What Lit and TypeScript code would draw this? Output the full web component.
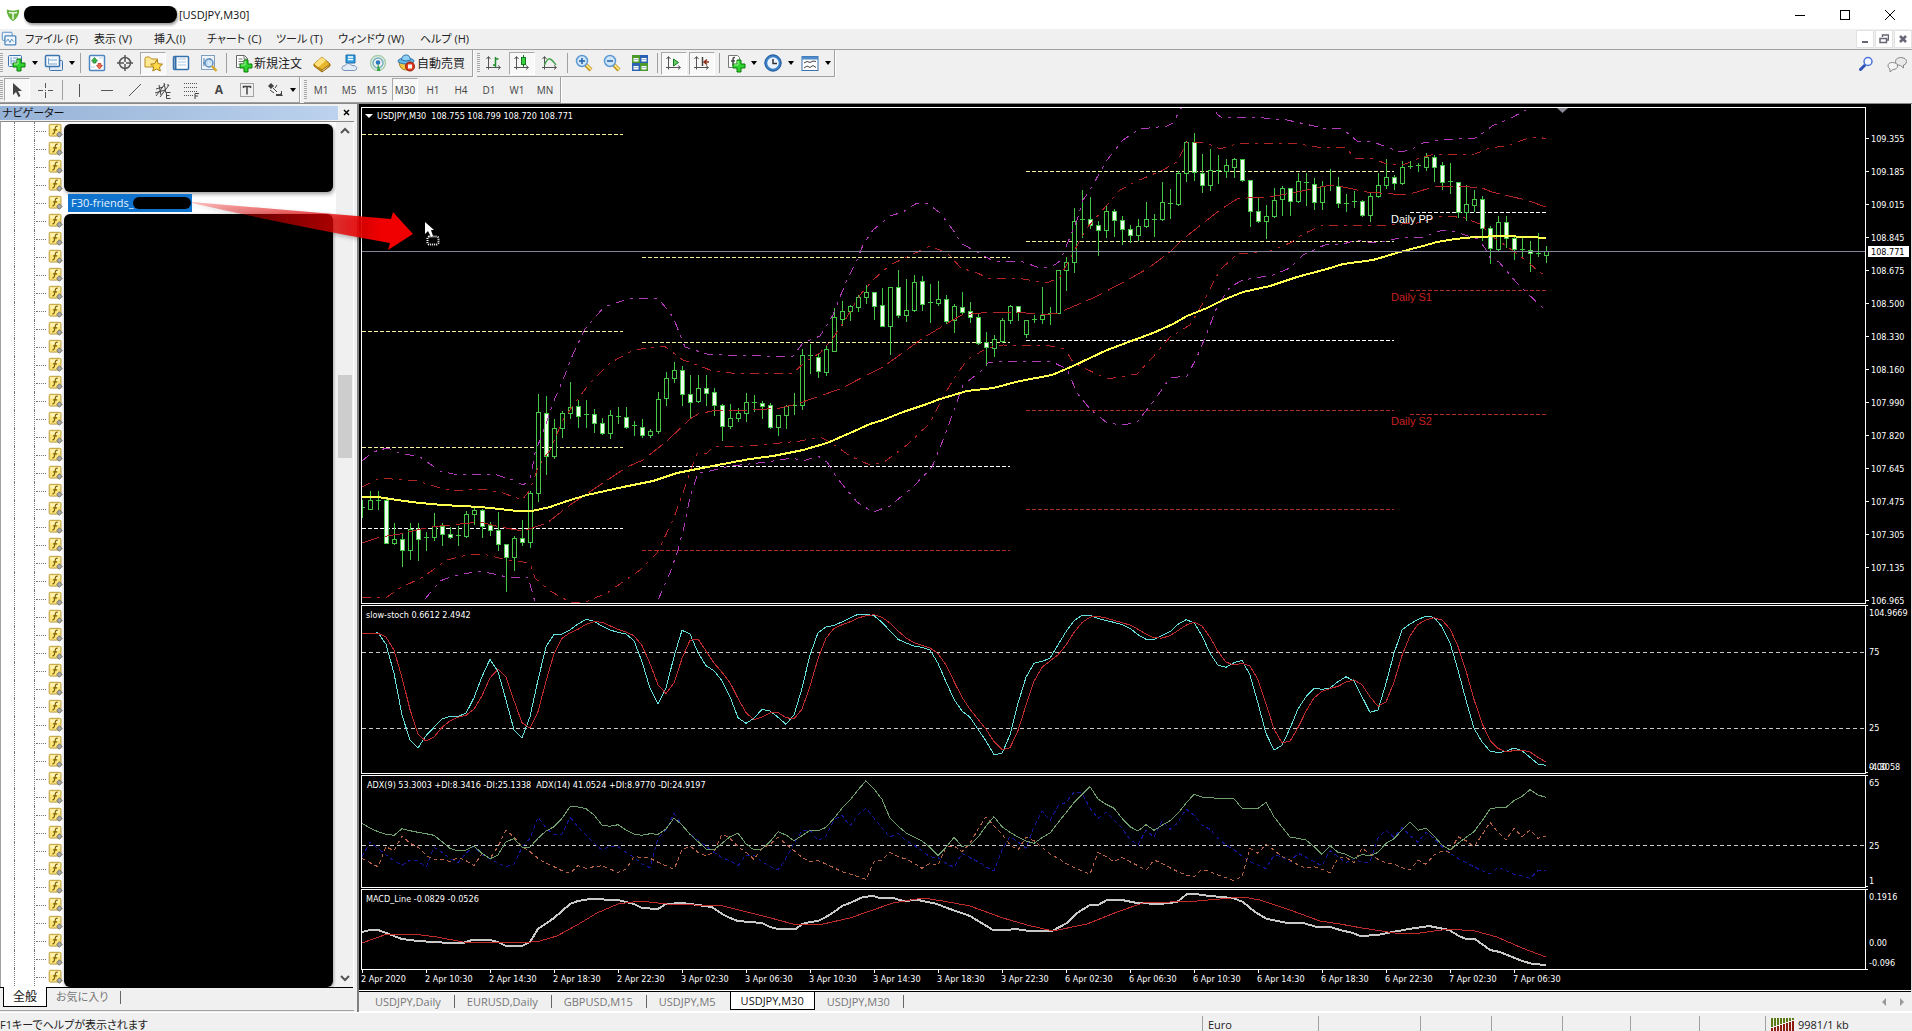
import { LitElement, html, svg, css, nothing } from "lit";
import type { SVGTemplateResult } from "lit";
import { customElement, property } from "lit/decorators.js";
import { classMap } from "lit/directives/class-map.js";

/* ------------------------------------------------------------------ */
/* Icons                                                               */
/* ------------------------------------------------------------------ */

const plus = (x: number, y: number) => svg`
  <path d="M${x + 4} ${y}h4v4h4v4h-4v4h-4v-4h-4v-4h4z" fill="#2fd32f" stroke="#0b7a0b"/>
  <path d="M${x + 5} ${y + 1}v4h-4" fill="none" stroke="#a8f5a0"/>`;

const axes = svg`
  <path d="M4.500 4v12.500M2 14.500h14" fill="none" stroke="#555"/>
  <path d="M2.500 6l2-2.500l2 2.500M14 12.500l2.500 2l-2.500 2" fill="none" stroke="#555"/>`;

const magnifier = (minus: boolean) => svg`
  <path d="M12 12l5 5" stroke="#b8901c" stroke-width="4"/>
  <path d="M12 11.500l5 5" stroke="#ffe27a" stroke-width="2"/>
  <circle cx="8" cy="8" r="5.500" fill="#cfe6fa" stroke="#5f9ad2" stroke-width="1.500"/>
  <path d="M5 8h6" stroke="#1f5fa8" stroke-width="1.500"/>
  ${minus ? nothing : svg`<path d="M8 5v6" stroke="#1f5fa8" stroke-width="1.500"/>`}`;

const icons: Record<string, SVGTemplateResult> = {
  newChart: svg`
    <rect x="1.500" y="2.500" width="13" height="11" rx="1" fill="#eef5fc" stroke="#3d74ad"/>
    <path d="M4 4v7h8M4 8h7M6 5h5" stroke="#7aa6d0" fill="none"/>${plus(6, 6)}`,
  profiles: svg`
    <rect x="5.500" y="7.500" width="13" height="10" rx="1" fill="#dfeaf6" stroke="#3d74ad"/>
    <rect x="1.500" y="2.500" width="14" height="11" rx="1" fill="#f4f9fe" stroke="#3d74ad" stroke-width="1.500"/>
    <path d="M4 11h9M4 7h9M4.500 5v6" stroke="#7aa6d0" fill="none"/>`,
  marketWatch: svg`
    <rect x="2.500" y="2.500" width="15" height="15" rx="1" fill="#fff" stroke="#4d86bf" stroke-width="1.500"/>
    <path d="M7.500 4.500l3 3.500h-1.500v2h-3v-2h-1.500z" fill="#39b54a" stroke="#197a28" stroke-width=".7"/>
    <path d="M12.500 16l-3-3.500h1.500v-2h3v2h1.500z" fill="#ef6d51" stroke="#b53018" stroke-width=".7"/>
    <path d="M12 5h4M4 14h4" stroke="#bcd3ea"/>`,
  target: svg`
    <circle cx="10" cy="10" r="5.500" fill="none" stroke="#555" stroke-width="1.500"/>
    <path d="M10 2v7M10 11v7M2 10h7M11 10h7" stroke="#555" stroke-width="1.500"/>`,
  navigator: svg`
    <path d="M2 5.500q0-1.500 1.500-1.500h3l2 2h6v8h-12.500z" fill="#ffe891" stroke="#b98d1d"/>
    <path d="M13.500 7l1.900 3.700l4.100.5l-3 2.800l.8 4l-3.800-2l-3.700 2l.8-4l-3-2.800l4.100-.5z" fill="#ffd94a" stroke="#a87d12"/>`,
  dataWindow: svg`
    <rect x="2.500" y="3.500" width="15" height="13" rx="1" fill="#fff" stroke="#3470ab" stroke-width="1.500"/>
    <path d="M4.500 4v12" stroke="#2f6aa8" stroke-width="2"/>
    <path d="M7 6h8M7 9h8M7 12h8" stroke="#a9c5e2"/>`,
  tester: svg`
    <rect x="2.500" y="2.500" width="13" height="14" fill="#eef4fa" stroke="#7f9fbf"/>
    <path d="M5 13v-8M8 12v-5M11 10v-5M4 10h2M7 8h2" stroke="#4f78a3" fill="none"/>
    <circle cx="10" cy="10" r="4" fill="#cfe6fa" fill-opacity=".8" stroke="#5d8fc2" stroke-width="1.500"/>
    <path d="M13 13l4.500 5" stroke="#d8a928" stroke-width="2.500"/>`,
  order: svg`
    <path d="M3.500 2.500h8l3 3v9h-11z" fill="#fff" stroke="#666"/>
    <path d="M11 2.500v3.500h3.500M5.500 6h4M5.500 8.500h6M5.500 11h4" stroke="#777" fill="none"/>${plus(7, 7)}`,
  gold: svg`
    <path d="M2 11l8-7l8 7l-8 6z" fill="#e8b62c" stroke="#9a6b0a"/>
    <path d="M2 11l8-7l4 3.500l-8 7z" fill="#ffe07a"/>
    <path d="M2 11v2l8 6v-2M18 11v2l-8 6" fill="#c8901a" stroke="#9a6b0a"/>`,
  cloud: svg`
    <path d="M6 2h9v8h-9z" fill="#35a0e0" stroke="#1a6cab"/>
    <path d="M8 4h5M8 6.500h5" stroke="#fff" stroke-width="1.500"/>
    <path d="M4 17.500q-2.500-.5-2-3q.6-2 3-1.800q1-2.700 4-2.200q2 .3 2.700 2q4-.6 5 2q.6 2.500-2 3z" fill="#e2ecf7" stroke="#7a94b8"/>`,
  signal: svg`
    <circle cx="10" cy="10" r="7.500" fill="none" stroke="#a9cfae" stroke-width="1.500"/>
    <circle cx="10" cy="10" r="5" fill="none" stroke="#6fb0b8" stroke-width="1.500"/>
    <circle cx="10" cy="9.500" r="2.300" fill="#2c74c0"/>
    <path d="M10 10l2.500 8h-3.500z" fill="#35a344"/>`,
  auto: svg`
    <path d="M3 9q1 8 7 8t7-8z" fill="#f4c842" stroke="#a87a12"/>
    <ellipse cx="10" cy="8" rx="8" ry="3" fill="#66b6e8" stroke="#2d75a8"/>
    <path d="M5.500 7q.5-5 4.500-5t4.500 5q-4.500 2-9 0z" fill="#8fd0f4" stroke="#2d75a8"/>
    <circle cx="14" cy="13.500" r="4.500" fill="#df3a1c" stroke="#9a1c08"/>
    <rect x="12" y="11.500" width="4" height="4" fill="#fff"/>`,
  bars: svg`${axes}<path d="M11.500 4v10M9 12h2.500M11.500 6h3" stroke="#1f8c2c" stroke-width="1.500" fill="none"/>`,
  candles: svg`${axes}<path d="M11.500 2v12" stroke="#137a1f"/><rect x="9.500" y="4.500" width="4" height="7" fill="#3ad33f" stroke="#137a1f"/>`,
  line: svg`${axes}<path d="M4.500 12q3-7 5.500-6t6 6" stroke="#4aa455" fill="none" stroke-width="1.500"/>`,
  zoomIn: svg`${magnifier(false)}`,
  zoomOut: svg`${magnifier(true)}`,
  tile: svg`
    <rect x="2" y="2" width="8" height="8" fill="#4c9a2a"/><rect x="10" y="2" width="8" height="8" fill="#2c62b5"/>
    <rect x="2" y="10" width="8" height="8" fill="#2c62b5"/><rect x="10" y="10" width="8" height="8" fill="#4c9a2a"/>
    <path d="M3.500 5h5v3.500h-5zM11.500 5h5v3.500h-5zM3.500 13h5v3.500h-5zM11.500 13h5v3.500h-5z" fill="#fff"/>
    <path d="M4 6.500h4M12 6.500h4M4 14.500h4M12 14.500h4" stroke="#9fb7cf"/>`,
  autoScroll: svg`${axes}<path d="M9.500 6v7l5-3.500z" fill="#5fd05f" stroke="#137a1f"/>`,
  shift: svg`${axes}<path d="M10.500 4v9" stroke="#444" stroke-width="1.500"/><path d="M12 9h5M15 6.500l-3 2.500l3 2.500" stroke="#8c2f14" fill="none" stroke-width="1.500"/>`,
  indicators: svg`
    <path d="M2.500 2.500h9l2 2v10h-11z" fill="#fff" stroke="#777"/>
    <path d="M9 4.500q-2-.5-2 2v6M5 8h4" stroke="#444" fill="none" stroke-width="1.500"/>${plus(7, 7)}`,
  clock: svg`
    <circle cx="10" cy="10" r="7" fill="#eaf3fc" stroke="#3a80c8" stroke-width="2.500"/>
    <circle cx="10" cy="10" r="8.200" fill="none" stroke="#1d5798"/>
    <path d="M10 6v4.500h4" stroke="#333" fill="none" stroke-width="1.500"/>`,
  template: svg`
    <rect x="2" y="3.500" width="16" height="14" fill="#fff" stroke="#3a72ad"/>
    <path d="M2 5h16" stroke="#4f8ccb" stroke-width="3"/>
    <path d="M4 10l3-1.500l3 1l3-1.500l3 .5M4 15l3-2l3 1.500l3-2l3 2" stroke="#444" fill="none"/>`,
  search: svg`
    <path d="M4.500 15.500l4-4" stroke="#2f51b8" stroke-width="3" stroke-linecap="round"/>
    <circle cx="12" cy="7.500" r="4" fill="#f4f7ff" stroke="#4c74d6" stroke-width="1.500"/>`,
  chat: svg`
    <path d="M13.500 3.500q6 .3 6 4q0 3-3 3.500v3l-3-2.500q-5-.5-5-4t5-4z" fill="#e9e9e9" stroke="#888"/>
    <path d="M5.500 8.500q5 .2 5 3.500t-4.500 3.500l-3 2.500v-3q-2-1-2-3q0-3.500 4.500-3.500z" fill="#f4f4f4" stroke="#888"/>`,
  cursor: svg`<path d="M6 3v12l3-3l2.500 5l2-1l-2.500-5h4z" fill="#444"/>`,
  cross: svg`<path d="M10.500 3v5M10.500 12v6M3 10.500h5M13 10.500h5M10 10.500h1" stroke="#555"/>`,
  vline: svg`<path d="M10.500 4v13" stroke="#555"/>`,
  hline: svg`<path d="M4 10.500h12" stroke="#555"/>`,
  trend: svg`<path d="M4 16l12-12" stroke="#555"/>`,
  channel: svg`
    <path d="M3 16l9-12M7 17l9-12M3 9l7-2M2 13l10-3M6 5l2 10M11 3l2 10M14 5h2" stroke="#444" fill="none"/>
    <path d="M17.500 12.500h-4v6h4M13.500 15.500h3" stroke="#444" fill="none"/>`,
  fibo: svg`
    <path d="M3 3.500h14M3 7.500h14M3 11.500h14M3 15.500h9" stroke="#555" stroke-dasharray="1 1"/>
    <path d="M18 13.500h-4v5.500M14 16h3" stroke="#444" fill="none"/>`,
  textBox: svg`
    <rect x="3.500" y="3.500" width="13" height="13" fill="none" stroke="#555" stroke-dasharray="1 1"/>
    <path d="M6 6.500h8M10 6.500v8M6.500 6v2M13.500 6v2" stroke="#444" fill="none" stroke-width="1.500"/>`,
  arrows: svg`
    <path d="M3 6l3-3l3 3l-3 3z" fill="#444"/><path d="M8 8l4 4M12 5l-2 3M5 10l4 3" stroke="#444"/>
    <path d="M11 14h5v-3h1v5h-6z" fill="#444"/><path d="M13 16l3-3l2 3z" fill="#444"/>`,
  chartWindow: svg`
    <rect x="2.500" y="2.500" width="11" height="9" rx="1" fill="#eaf3fc" stroke="#4d86bf"/>
    <rect x="5.500" y="6.500" width="12" height="10" rx="1" fill="#f4f9fe" stroke="#4d86bf" stroke-width="1.500"/>
    <path d="M7 13l2-3l2 4l2-4l2 3" fill="none" stroke="#4d86bf"/>`,
  logo: svg`
    <path d="M3 4q7 2.500 14 0q0 9-7 13q-7-4-7-13z" fill="#64b33c"/>
    <path d="M5.500 7q4.500 1.500 9 0M10 8v7" stroke="#fff" stroke-width="1.500" fill="none"/>`,
  indicator: svg`
    <rect x="1.500" y="1.500" width="15" height="15" rx="1.500" fill="#fbe47a" stroke="#a98722"/>
    <path d="M3 3h12v4h-12z" fill="#fff4b8"/>
    <path d="M12.500 4q-2.800-.8-3.300 2.500l-1 5q-.5 2.500-2.700 2M6.500 8.500h5" fill="none" stroke="#7c5d0a" stroke-width="1.500"/>
    <path d="M14.500 11l3.500 3.500l-3.500 3.500l-3.500-3.500z" fill="#a9a9a9" stroke="#5f5f5f"/>`,
};

const icon = (name: string, cls = "icon") =>
  html`<svg class=${cls} viewBox="0 0 20 20" aria-hidden="true">${icons[name]}</svg>`;

/* ------------------------------------------------------------------ */
/* Chart data                                                          */
/* ------------------------------------------------------------------ */

const STEP = 8;

/* high, body top, body bottom, low, bearish */
const candles: number[][] = [
  [500,507,509,517,0],[491,500,509,509,0],[491,500,501,509,0],[499,500,543,543,1],[523,539,543,544,0],
  [534,539,550,566,1],[523,529,550,559,0],[523,529,539,560,1],[532,537,539,550,0],[513,526,537,540,0],
  [523,526,534,545,1],[527,534,537,538,1],[526,535,537,545,0],[511,514,536,537,0],[507,510,514,524,0],
  [509,510,526,537,1],[522,525,530,535,1],[512,530,544,550,1],[544,544,557,591,1],[536,538,557,570,0],
  [520,538,542,545,1],[491,493,542,547,0],[394,412,493,501,0],[396,413,456,474,1],[419,428,456,458,0],
  [411,413,428,437,0],[382,407,413,418,0],[400,406,416,427,1],[400,414,416,427,0],[409,414,423,432,1],
  [418,423,433,434,1],[410,415,433,438,0],[407,416,418,423,1],[407,417,427,428,1],[421,425,426,435,1],
  [419,427,435,437,1],[429,431,435,437,0],[392,399,431,433,0],[372,378,398,405,0],[362,370,378,382,0],
  [366,370,394,405,1],[375,394,402,418,1],[375,388,401,402,0],[375,388,393,405,1],[388,392,405,415,1],
  [404,405,426,440,1],[404,418,426,428,0],[408,413,418,421,0],[393,402,413,421,0],[395,402,403,411,0],
  [401,403,406,418,1],[403,405,427,428,1],[415,415,427,435,0],[405,406,415,428,0],[393,405,406,414,0],
  [349,355,405,409,0],[344,355,357,373,1],[354,357,371,377,1],[345,349,372,375,0],[308,317,351,351,0],
  [301,311,319,325,0],[305,306,311,320,0],[295,297,307,311,0],[285,292,297,303,0],[292,292,306,319,1],
  [288,305,326,326,1],[287,287,326,354,0],[270,287,315,317,1],[279,310,315,321,0],[275,282,310,311,0],
  [276,281,304,310,1],[284,302,304,322,1],[281,299,303,305,0],[295,299,321,323,1],[304,306,320,332,0],
  [292,307,312,314,1],[302,311,317,322,1],[314,317,343,344,1],[332,342,347,365,1],[335,339,348,356,0],
  [318,320,341,342,0],[305,306,320,323,0],[306,306,312,320,1],[320,320,334,337,0],[315,319,320,322,1],
  [287,315,319,323,0],[307,313,315,324,0],[270,270,313,313,0],[257,262,270,290,0],[208,221,262,272,0],
  [190,219,220,237,1],[197,219,225,228,1],[221,225,230,255,1],[206,211,230,237,0],[209,211,220,236,1],
  [216,220,229,244,1],[225,229,235,242,1],[219,226,235,240,0],[202,219,226,227,0],[214,219,220,236,0],
  [182,202,219,220,0],[189,203,204,218,0],[171,173,204,205,0],[141,142,173,181,0],[133,142,172,180,1],
  [154,173,185,192,1],[149,170,185,190,0],[155,170,171,183,1],[159,165,171,177,0],[158,159,167,177,0],
  [159,159,180,181,1],[180,180,211,226,1],[198,211,221,222,1],[205,216,221,238,0],[188,200,216,217,0],
  [186,188,199,215,0],[188,188,201,215,1],[173,181,201,202,0],[173,182,184,205,1],[178,184,202,209,1],
  [181,186,202,209,0],[169,185,186,190,1],[177,186,203,207,1],[194,203,204,211,0],[191,201,202,207,1],
  [200,201,215,216,1],[193,196,215,221,0],[173,185,196,197,0],[159,177,185,188,0],[175,177,183,189,1],
  [161,167,183,184,0],[161,166,168,168,1],[163,165,167,171,0],[153,157,167,170,0],[155,157,167,181,1],
  [162,165,182,189,1],[163,181,183,193,1],[182,182,212,217,1],[185,204,212,220,0],[190,199,205,211,0],
  [196,199,228,240,1],[226,228,248,263,1],[216,222,249,250,0],[216,222,238,247,1],[236,238,249,259,1],
  [238,249,250,257,1],[241,250,253,271,1],[233,253,255,256,1],[246,251,255,262,0],
];

const movingAverage = "362,497 378,497 397,500 420,503 443,505 480,507 500,509 517,511 532,511 550,507 567,501 587,495 623,487 653,481 677,473 707,467 723,464 750,459 773,456 803,450 827,443 850,433 870,424 883,420 903,412 927,404 940,399 967,391 993,388 1020,381 1052,375 1073,366 1107,350 1153,333 1173,324 1187,316 1207,308 1223,300 1243,292 1270,286 1297,277 1327,269 1343,264 1373,260 1400,252 1423,246 1437,242 1455,239 1475,237 1502,236 1529,237 1546,238";

const bandMiddle = "362,543 380,537 400,534 430,527 460,524 480,522 500,527 523,531 547,523 570,505 597,487 627,467 643,460 667,441 690,419 698,414 717,410 740,411 780,408 797,404 817,397 840,389 883,367 923,338 953,320 962,315 990,312 1018,312 1043,315 1058,313 1093,298 1122,283 1147,269 1170,252 1183,239 1220,210 1237,199 1247,198 1270,197 1297,192 1317,188 1330,185 1343,187 1367,192 1393,194 1410,194 1437,186 1458,186 1482,188 1492,192 1509,196 1526,200 1546,207";

const redBands = [
  "362,487 380,478 417,481 437,487 453,491 483,489 503,493 522,500 530,490 538,467 550,450 563,420 577,400 590,383 610,363 634,350 664,346 683,360 713,371 740,374 757,373 793,373 805,362 820,353 833,338 847,317 860,295 873,280 890,265 907,257 930,246 947,253 962,269 973,271 988,278 1023,279 1047,283 1060,277 1073,253 1087,228 1107,205 1120,190 1137,181 1163,170 1177,162 1187,142 1207,143 1220,149 1240,143 1273,144 1293,143 1317,147 1345,147 1355,158 1373,159 1387,164 1403,165 1417,159 1431,155 1475,154 1489,148 1506,146 1526,139 1539,137 1546,139",
  "362,597 387,597 400,588 423,577 447,560 467,555 483,554 507,560 523,562 530,563 535,578 550,591 570,602 583,603 607,593 640,570 657,553 673,520 683,493 690,472 697,454 707,453 713,447 750,446 770,444 800,441 820,437 830,442 850,456 870,465 883,463 907,445 930,423 943,397 953,380 967,360 987,348 1003,345 1050,346 1065,349 1073,362 1080,366 1107,379 1137,374 1153,357 1170,337 1190,325 1203,303 1213,283 1220,270 1237,254 1270,251 1290,243 1303,234 1323,225 1360,225 1387,225 1417,223 1440,216 1448,216 1465,218 1482,225 1490,235 1502,243 1516,253 1529,263 1539,272 1546,276",
];

const purpleBands = [
  "362,461 373,452 387,448 400,453 420,457 440,471 453,474 497,475 513,480 523,485 530,480 535,453 545,427 553,403 563,380 573,354 585,329 604,307 628,299 658,298 673,317 685,347 707,354 740,356 753,355 780,357 793,356 803,343 820,336 833,315 840,297 847,280 857,260 863,245 873,230 890,216 903,212 917,203 927,203 940,213 953,230 962,244 977,252 993,261 1023,262 1037,267 1050,268 1060,261 1068,242 1077,220 1083,200 1090,190 1107,160 1123,140 1140,129 1167,126 1173,123 1180,110 1187,100 1210,100 1217,114 1222,118 1253,117 1287,120 1323,128 1343,129 1357,141 1373,142 1400,152 1410,150 1423,143 1440,140 1475,138 1483,133 1492,126 1509,119 1526,110 1546,100",
  "425,599 440,581 453,576 480,571 507,577 528,577 535,602 545,640 650,625 658,600 670,573 678,550 685,523 690,497 698,473 710,471 730,466 740,465 767,462 793,458 803,461 818,456 827,462 837,478 857,502 873,512 890,506 913,487 932,467 943,440 953,413 963,385 980,372 988,363 1003,361 1050,361 1067,369 1077,393 1090,409 1107,423 1123,425 1137,422 1153,402 1170,378 1187,376 1197,357 1207,333 1217,307 1230,287 1243,280 1273,275 1290,268 1303,255 1327,244 1343,244 1357,240 1373,243 1387,241 1403,237 1420,238 1440,231 1448,230 1465,235 1478,239 1485,248 1490,258 1499,262 1516,282 1526,292 1543,308",
];

/* x start, x end, y, colour class */
const levels: [number, number, number, string][] = [
  [362,623,134,"khaki"],[362,623,331,"khaki"],[362,623,447,"khaki"],[362,623,528,"white"],
  [642,1010,257,"khaki"],[642,1010,342,"khaki"],[642,1010,466,"white"],[642,1010,550,"red"],
  [1026,1394,171,"khaki"],[1026,1394,241,"khaki"],[1026,1394,340,"white"],[1026,1394,410,"red"],[1026,1394,509,"red"],
  [1410,1546,212,"white"],[1410,1546,290,"red"],[1410,1546,414,"red"],
];

/* oscillator samples, one per bar, three units to a pixel */
const stoch = [100,102,98,133,220,345,420,444,407,382,357,349,349,340,293,230,178,215,300,390,414,350,240,140,103,102,90,72,58,64,78,90,97,102,122,185,265,312,265,170,91,102,158,197,212,242,290,353,370,355,328,333,352,373,345,265,165,98,81,76,66,54,43,43,47,67,93,118,129,138,142,150,190,245,298,333,352,388,423,464,460,405,310,232,190,184,175,135,95,62,46,46,55,62,67,74,85,104,118,118,107,95,73,59,68,107,160,196,202,188,181,225,310,400,450,436,385,327,290,265,268,264,245,230,243,290,337,330,250,160,90,72,58,49,52,80,128,210,300,385,425,453,458,454,444,452,472,492,496];

const adx = [670,684,695,703,706,686,692,697,701,706,725,745,753,750,738,760,776,765,725,716,741,741,715,693,680,655,620,621,626,645,675,679,674,690,702,706,701,703,687,654,675,703,725,747,749,730,710,700,732,750,747,725,695,705,722,707,691,693,682,655,625,600,570,542,567,598,655,678,699,711,723,742,767,742,712,739,736,712,678,650,680,697,711,723,730,713,699,668,638,608,583,560,597,613,625,655,680,693,674,691,676,662,640,610,583,591,593,595,595,596,625,625,625,607,650,681,711,715,720,740,763,737,757,763,776,763,768,757,730,716,690,667,691,685,708,735,750,730,712,695,663,627,622,622,602,589,569,585,592];

const plusDi = [770,727,745,765,783,796,780,783,802,742,757,775,788,760,738,765,776,790,800,792,742,715,652,683,705,702,652,680,705,730,750,738,740,757,772,792,803,715,690,640,675,703,720,738,757,773,782,797,765,765,785,800,810,775,730,692,690,722,708,660,645,678,645,624,655,683,712,700,722,735,753,770,773,790,802,760,773,785,800,812,750,710,725,745,680,633,662,618,607,577,578,625,655,637,660,685,718,735,690,712,662,688,668,627,645,675,688,715,735,750,768,785,795,806,765,770,785,760,772,785,797,752,770,788,775,788,785,715,690,712,683,707,727,697,715,740,760,775,788,800,812,822,802,812,823,828,835,812,812];

const minusDi = [775,788,800,740,752,708,730,742,765,780,777,785,772,782,797,760,775,740,690,712,740,755,775,790,800,812,820,797,805,800,797,807,817,808,770,772,775,787,797,808,750,738,757,767,757,702,715,740,757,778,745,733,712,732,752,772,785,782,792,803,815,822,830,838,785,780,757,770,777,790,805,790,797,740,738,755,730,688,650,678,702,735,750,712,722,742,762,775,790,803,812,823,757,770,785,772,785,797,811,780,790,803,815,825,831,808,815,825,833,842,830,745,760,733,750,770,780,795,804,800,808,818,775,772,788,745,762,778,788,793,803,810,780,793,765,753,757,710,722,740,705,667,697,720,685,710,690,715,708];

const macd = "362,932 370,930 378,930 386,933 402,939 418,941 434,942 450,943 463,943 472,940 490,940 498,942 506,946 522,946 530,942 538,929 554,918 562,911 570,904 578,901 590,899 618,900 634,904 642,908 658,909 666,904 682,903 698,905 712,907 722,914 730,918 738,921 762,923 770,927 778,929 796,929 802,924 810,922 818,921 826,917 834,912 842,906 850,903 863,897 873,896 880,898 893,898 903,901 918,900 937,904 947,908 970,916 993,930 1007,930 1015,929 1030,931 1052,931 1067,923 1077,913 1090,905 1098,905 1107,900 1122,900 1137,903 1160,904 1177,902 1187,894 1195,894 1210,896 1233,898 1243,902 1255,912 1267,919 1288,923 1303,923 1317,927 1330,927 1340,930 1353,933 1360,936 1378,935 1387,933 1409,929 1429,926 1449,930 1459,936 1466,939 1475,939 1490,950 1500,952 1522,961 1533,964 1546,965";

const macdSignal = "362,943 387,934 413,934 437,937 463,942 523,943 540,941 557,936 577,925 597,913 618,904 640,901 667,904 723,906 743,911 767,917 793,924 823,924 850,918 867,912 893,903 923,898 943,901 970,906 1003,918 1027,925 1053,931 1087,924 1117,912 1143,903 1197,901 1243,897 1260,900 1290,910 1320,921 1340,924 1362,928 1395,933 1420,933 1449,929 1475,931 1497,937 1522,948 1546,957";

const perBar = (values: number[], top: number) =>
  values.map((v, i) => `${i * STEP},${Math.round((v / 3 - top) * 10) / 10}`).join(" ");

const smooth = (values: number[]) =>
  values.map((v, i) => {
    const a = values[Math.max(0, i - 1)];
    const b = values[Math.max(0, i - 2)];
    return (v + a + b) / 3;
  });

const times = ["2 Apr 2020","2 Apr 10:30","2 Apr 14:30","2 Apr 18:30","2 Apr 22:30","3 Apr 02:30","3 Apr 06:30","3 Apr 10:30","3 Apr 14:30","3 Apr 18:30","3 Apr 22:30","6 Apr 02:30","6 Apr 06:30","6 Apr 10:30","6 Apr 14:30","6 Apr 18:30","6 Apr 22:30","7 Apr 02:30","7 Apr 06:30"];

const prices = ["109.355","109.185","109.015","108.845","108.675","108.500","108.330","108.160","107.990","107.820","107.645","107.475","107.305","107.135","106.965"];

/* ------------------------------------------------------------------ */
/* Title bar and menu                                                  */
/* ------------------------------------------------------------------ */

const uiFont = css`"Open Sans", "Noto Sans CJK JP", sans-serif`;

@customElement("title-bar")
class TitleBar extends LitElement {
  static styles = css`
    :host { display: block; font-family: ${uiFont}; font-feature-settings: "palt"; }
    button { border: 0; padding: 0; background: none; font: inherit; color: inherit; }
    .title { display: flex; align-items: center; height: 29px; background: #fff; padding-left: 4px; }
    .logo { width: 18px; height: 18px; margin-right: 2px; }
    .mask { width: 153px; height: 17px; border-radius: 8px; background: #000; box-shadow: 1px 2px 3px #0006; }
    .caption { margin: 0 auto 0 2px; font-size: 11px; font-weight: 400; color: #111; }
    .window { display: grid; place-items: center; width: 45px; height: 27px; }
    .window svg { width: 12px; height: 12px; }
    .menu { display: flex; align-items: center; height: 20px; background: #f0f0f0; border-bottom: 1px solid #a0a0a0; color: #222; font-size: 11px; }
    .doc { width: 18px; height: 18px; margin-right: 7px; }
    .items { display: grid; grid-template-columns: 69px 60px 53px 69px 62px 82px 60px; margin-right: auto; }
    .items button { text-align: left; line-height: 18px; white-space: nowrap; }
    .child { display: grid; place-items: center; width: 18px; height: 18px; margin-left: 1px; background: #fff; border: 1px solid #e2e2e2; box-sizing: border-box; }
    .child svg { width: 10px; height: 10px; }
  `;

  render() {
    const menus = ["ファイル (F)", "表示 (V)", "挿入(I)", "チャート (C)", "ツール (T)", "ウィンドウ (W)", "ヘルプ (H)"];
    return html`
      <header class="title">
        ${icon("logo", "logo")}
        <span class="mask"></span>
        <h1 class="caption">[USDJPY,M30]</h1>
        <button class="window" aria-label="Minimize"><svg viewBox="0 0 12 12"><path d="M1 6.500h10" stroke="#000"/></svg></button>
        <button class="window" aria-label="Maximize"><svg viewBox="0 0 12 12"><rect x="1.500" y="1.500" width="9" height="9" fill="none" stroke="#000"/></svg></button>
        <button class="window" aria-label="Close"><svg viewBox="0 0 12 12"><path d="M1 1l10 10M11 1l-10 10" stroke="#000"/></svg></button>
      </header>
      <nav class="menu">
        ${icon("chartWindow", "doc")}
        <div class="items">${menus.map((m) => html`<button>${m}</button>`)}</div>
        <button class="child" aria-label="Minimize chart"><svg viewBox="0 0 10 10"><path d="M2 8h6" stroke="#667" stroke-width="2"/></svg></button>
        <button class="child" aria-label="Restore chart"><svg viewBox="0 0 10 10"><path d="M3.500 3v-2h6v5h-2M1 4.500h6.500v4h-6.500z" fill="none" stroke="#667" stroke-width="1.500"/></svg></button>
        <button class="child" aria-label="Close chart"><svg viewBox="0 0 10 10"><path d="M2 2l6 6M8 2l-6 6" stroke="#667" stroke-width="2.500"/></svg></button>
      </nav>
    `;
  }
}

/* ------------------------------------------------------------------ */
/* Toolbars                                                            */
/* ------------------------------------------------------------------ */

type Tool = { icon?: string; glyph?: string; text?: string; pressed?: boolean; drop?: boolean; sep?: boolean; label?: string };

const sep: Tool = { sep: true };
const standard: Tool[] = [
  { icon: "newChart", drop: true, label: "New chart" }, { icon: "profiles", drop: true, label: "Profiles" }, sep,
  { icon: "marketWatch", label: "Market watch" }, { icon: "target", label: "Crosshair" },
  { icon: "navigator", pressed: true, label: "Navigator" }, { icon: "dataWindow", label: "Terminal" },
  { icon: "tester", label: "Tester" }, sep,
  { icon: "order", text: "新規注文" }, { icon: "gold", label: "Editor" }, { icon: "cloud", label: "Cloud" },
  { icon: "signal", label: "Signals" }, { icon: "auto", text: "自動売買" },
];
const charting: Tool[] = [
  { icon: "bars", label: "Bars" }, { icon: "candles", pressed: true, label: "Candles" }, { icon: "line", label: "Line" }, sep,
  { icon: "zoomIn", label: "Zoom in" }, { icon: "zoomOut", label: "Zoom out" }, { icon: "tile", label: "Tile" }, sep,
  { icon: "autoScroll", pressed: true, label: "Auto scroll" }, { icon: "shift", pressed: true, label: "Shift" }, sep,
  { icon: "indicators", drop: true, label: "Indicators" }, { icon: "clock", drop: true, label: "Periods" },
  { icon: "template", drop: true, label: "Templates" },
];
const drawing: Tool[] = [
  { icon: "cursor", pressed: true, label: "Cursor" }, { icon: "cross", label: "Cross" }, sep,
  { icon: "vline", label: "Vertical line" }, { icon: "hline", label: "Horizontal line" }, { icon: "trend", label: "Trend line" },
  { icon: "channel", label: "Channel" }, { icon: "fibo", label: "Fibonacci" }, { glyph: "A" },
  { icon: "textBox", label: "Text label" }, { icon: "arrows", drop: true, label: "Arrows" },
];
const periods: Tool[] = ["M1", "M5", "M15", "M30", "H1", "H4", "D1", "W1", "MN"].map((p) => ({ glyph: p, pressed: p === "M30" }));

@customElement("tool-group")
class ToolGroup extends LitElement {
  @property({ attribute: false }) tools: Tool[] = [];
  @property({ type: Boolean }) periods = false;

  static styles = css`
    :host { display: flex; align-items: center; padding: 0 1px 0 0; border-right: 1px solid #a0a0a0; border-bottom: 1px solid #a0a0a0; box-shadow: 1px 0 0 #fff; font-family: ${uiFont}; }
    .grip { width: 3px; height: 20px; background: repeating-linear-gradient(#a8a8a8 0 1px, #f0f0f0 1px 2px); }
    button { display: flex; align-items: center; height: 23px; padding: 0; border: 0; background: none; color: #222; font-family: inherit; font-size: 12px; }
    .face { display: grid; place-items: center; width: 26px; height: 23px; margin: 0 1px; box-sizing: border-box; }
    .pressed .face { background: #f8f8f8; border: 1px solid #a8a8a8; border-right-color: #fff; border-bottom-color: #fff; }
    .icon { width: 20px; height: 20px; }
    .wide { padding-right: 6px; }
    .wide .face { margin-right: -2px; }
    .text { white-space: nowrap; }
    .caret { width: 9px; height: 4px; }
    .sep { width: 1px; height: 20px; margin: 0 2px 0 3px; background: #a0a0a0; }
    .glyph { color: #444; font-size: 11px; }
    .periods .glyph { font-size: 10px; }
    .bold { font-weight: 700; font-size: 12px; }
    .bar { display: flex; align-items: center; }
  `;

  render() {
    return html`
      <span class="grip"></span>
      <div class=${classMap({ bar: true, periods: this.periods })}>
        ${this.tools.map((t) =>
          t.sep
            ? html`<span class="sep"></span>`
            : html`<button class=${classMap({ pressed: !!t.pressed, wide: !!t.text })} aria-label=${t.label ?? nothing}>
                <span class="face">
                  ${t.icon
                    ? icon(t.icon)
                    : html`<span class=${classMap({ glyph: true, bold: t.glyph!.length === 1 })}>${t.glyph}</span>`}
                </span>
                ${t.text ? html`<span class="text">${t.text}</span>` : nothing}
                ${t.drop ? html`<svg class="caret" viewBox="0 0 9 4"><path d="M1 0h6l-3 4z" fill="#000"/></svg>` : nothing}
              </button>`
        )}
      </div>
    `;
  }
}

/* ------------------------------------------------------------------ */
/* Navigator                                                           */
/* ------------------------------------------------------------------ */

@customElement("navigator-panel")
class NavigatorPanel extends LitElement {
  static styles = css`
    :host { display: grid; grid-template-rows: 17px minmax(0, 1fr) 25px; min-height: 0; background: #f0f0f0; font-family: ${uiFont}; }
    button { border: 0; padding: 0; background: none; font: inherit; color: inherit; }
    .head { display: flex; align-items: center; line-height: 14px; color: #111; font-feature-settings: "palt"; }
    .name { flex: 1; height: 14px; padding-left: 2px; margin: 0; font-size: 11px; font-weight: 400; background: linear-gradient(90deg, #96b2d6, #bcd2ee); }
    .close { display: grid; place-items: center; width: 16px; height: 15px; }
    .body { display: flex; min-height: 0; background: #fff; border-top: 1px solid #888; border-left: 1px solid #a0a0a0; overflow: hidden; }
    .tree { flex: none; width: 63px; margin: 0; padding: 0; list-style: none; }
    .row { display: flex; align-items: center; height: 18px; }
    .stem { align-self: stretch; width: 13px; border-right: 1px dotted #777; }
    .trunk { align-self: stretch; width: 20px; border-right: 1px dotted #777; }
    .branch { width: 10px; margin: 0 2px 0 1px; border-top: 1px dotted #777; }
    .leaf { width: 16px; height: 16px; }
    .names { flex: 1; display: flex; flex-direction: column; gap: 2px; padding: 2px 3px 0 0; min-width: 0; }
    .mask { background: #000; border-radius: 6px; box-shadow: 1px 2px 4px #0006; }
    .short { flex: none; height: 68px; }
    .rest { flex: 1; }
    .current { display: flex; align-items: center; flex: none; align-self: flex-start; width: 121px; height: 18px; margin-left: 4px; padding-left: 3px; background: #0f72cc; color: #e4f2ff; font-size: 11px; line-height: 18px; }
    .pill { flex: 1; height: 12px; margin-right: 1px; border-radius: 6px; background: #000; }
    .scroll { display: flex; flex-direction: column; align-items: center; justify-content: space-between; width: 17px; background: #f0f0f0; border-right: 1px solid #fff; }
    .scroll button { display: grid; place-items: center; width: 17px; height: 17px; }
    .gap { flex: 245 1 0; }
    .thumb { flex: 86 1 0; width: 14px; background: #cdcdcd; }
    .gap.after { flex-grow: 532; }
    .tabs { display: flex; align-items: flex-start; border-bottom: 1px solid #a0a0a0; margin-bottom: 1px; padding-left: 3px; color: #777; background: linear-gradient(#000, #000) 0 0 / 353px 1px no-repeat; }
    .tab { height: 20px; line-height: 18px; padding: 0 9px; font-size: 12px; }
    .on { background: #fff; color: #111; border: 1px solid #000; border-top: 0; }
    .off { font-size: 11px; font-feature-settings: "palt"; }
    .line { width: 1px; height: 13px; margin: 4px 0 0 3px; background: #666; }
  `;

  render() {
    return html`
      <header class="head">
        <h2 class="name">ナビゲーター</h2>
        <button class="close" aria-label="Close navigator"><svg width="7" height="7" viewBox="0 0 7 7"><path d="M1 1l5 5M6 1l-5 5" stroke="#000" stroke-width="1.500"/></svg></button>
      </header>
      <div class="body">
        <ul class="tree">
          ${Array.from({ length: 48 }, () => html`<li class="row"><i class="stem"></i><i class="trunk"></i><i class="branch"></i>${icon("indicator", "leaf")}</li>`)}
        </ul>
        <div class="names">
          <span class="mask short"></span>
          <div class="current">F30-friends_<span class="pill"></span></div>
          <span class="mask rest"></span>
        </div>
        <div class="scroll">
          <button aria-label="Scroll up"><svg width="10" height="7" viewBox="0 0 10 7"><path d="M1 6l4-4l4 4" fill="none" stroke="#555" stroke-width="2"/></svg></button>
          <i class="gap"></i><i class="thumb"></i><i class="gap after"></i>
          <button aria-label="Scroll down"><svg width="10" height="7" viewBox="0 0 10 7"><path d="M1 1l4 4l4-4" fill="none" stroke="#555" stroke-width="2"/></svg></button>
        </div>
      </div>
      <div class="tabs"><button class="tab on">全般</button><button class="tab off">お気に入り</button><i class="line"></i></div>
    `;
  }
}

/* ------------------------------------------------------------------ */
/* Chart window                                                        */
/* ------------------------------------------------------------------ */

@customElement("chart-window")
class ChartWindow extends LitElement {
  static styles = css`
    :host { display: grid; grid-template-rows: minmax(0, 1fr) 20px; min-width: 0; min-height: 0; font-family: ${uiFont}; border-left: 2px solid #808080; }
    .canvas { display: grid; grid-template-rows: minmax(0, 1fr) 20px 2px; padding: 3px 0 0 2px; background: #000; min-height: 0; border-right: 1px solid #ddd; }
    .panes { display: grid; grid-template-rows: 497fr 169fr 113fr 81fr; row-gap: 1px; min-height: 0; }
    .pane { display: grid; grid-template-columns: minmax(0, 1fr) 45px; min-height: 0; }
    .plot { border: 1px solid #fff; min-height: 0; overflow: hidden; }
    .axis { min-height: 0; }
    svg { display: block; width: 100%; height: 100%; }
    .axis svg, .times { overflow: visible; }
    .edge { margin-left: -2px; background: #fff; border-bottom: 1px solid #000; box-sizing: border-box; }
    text { font-family: "DejaVu Sans Condensed", "Noto Sans", sans-serif; font-size: 9px; fill: #fff; white-space: pre; }
    .tag { font-family: "Liberation Sans", sans-serif; font-size: 11px; }
    .crisp { shape-rendering: crispEdges; fill: none; stroke-width: 1; }
    .khaki { stroke: #f6f2a0; stroke-dasharray: 4 2; }
    .white { stroke: #fff; stroke-dasharray: 4 2; }
    .red { stroke: #b02a2a; stroke-dasharray: 4 2; }
    .grid { stroke: #c8c8c8; stroke-dasharray: 4 3; }
    .price { stroke: #84849a; }
    .ma { stroke: #ffff4d; stroke-width: 2; }
    .mid { stroke: #b32424; stroke-dasharray: 18 6; }
    .band { stroke: #b32424; stroke-dasharray: 9 6 3 6; }
    .outer { stroke: #b03ab8; stroke-dasharray: 9 6 3 6; }
    .wick { stroke: #46c846; }
    .bull { stroke: #46c846; fill: #000; }
    .bear { stroke: #46c846; fill: #f0fff0; }
    .stoch { stroke: #66e0dc; }
    .signal { stroke: #c02c2c; }
    .adx { stroke: #6ea06e; }
    .pdi { stroke: #16169c; stroke-dasharray: 4 3; }
    .mdi { stroke: #b86444; stroke-dasharray: 4 3; }
    .macd { stroke: #c8c8c8; stroke-width: 2; }
    .tick { stroke: #fff; }
    .ink { fill: #000; }
    .crimson { fill: #c82020; }
    .paper { fill: #fff; }
    .tabs { display: flex; align-items: center; background: #f0f0f0; border-bottom: 1px solid #fff; padding-left: 4px; box-sizing: border-box; }
    button { border: 0; padding: 0; background: none; font: inherit; color: inherit; }
    .tab { padding: 0 13px 0 12px; height: 13px; line-height: 13px; font-size: 11px; color: #777; border-right: 1px solid #666; white-space: nowrap; }
    .tab.plain { border-right-color: transparent; }
    .tab.on { align-self: flex-start; height: 18px; line-height: 17px; padding: 0 10px; background: #fff; color: #111; border: 1px solid #000; border-top: 0; }
    .arrows { display: flex; gap: 12px; margin-left: auto; padding-right: 8px; }
  `;

  private ticks(labels: [number, string][], height: number) {
    return svg`
      <path class="crisp tick" d="M0 .5h2M0 ${height}h2"/>
      ${labels.map(([y, t]) => svg`<text x="3" y=${y + 3}>${t}</text>`)}`;
  }

  private price() {
    return svg`
      <g transform="translate(-362 -108)">
        ${levels.map(([a, b, y, c]) => svg`<path class="crisp ${c}" d="M${a} ${y}.5H${b}"/>`)}
        ${candles.map(([h, t, b, l, bear], i) => {
          const x = 362 + i * STEP;
          return svg`
            <path class="crisp wick" d="M${x}.5 ${h}V${l + 1}"/>
            ${b - t <= 2
              ? svg`<path class="crisp wick" d="M${x - 2} ${t}.5h5"/>`
              : svg`<rect class="crisp ${bear ? "bear" : "bull"}" x=${x - 1.5} y=${t + 0.5} width="4" height=${b - t}/>`}`;
        })}
        <polyline class="crisp mid" points=${bandMiddle}/>
        ${redBands.map((p) => svg`<polyline class="crisp band" points=${p}/>`)}
        ${purpleBands.map((p) => svg`<polyline class="crisp outer" points=${p}/>`)}
        <polyline class="crisp ma" points=${movingAverage}/>
        <path class="paper" d="M365 114h8l-4 4z"/>
        <path d="M1557 108h11l-5.500 5z" fill="#8a8a96"/>
        <text x="377" y="119">USDJPY,M30  108.755 108.799 108.720 108.771</text>
        <text class="tag" x="1391" y="223">Daily PP</text>
        <text class="tag crimson" x="1391" y="301">Daily S1</text>
        <text class="tag crimson" x="1391" y="425">Daily S2</text>
      </g>
      <path class="crisp price" d="M0 143.500H3000"/>`;
  }

  render() {
    const tabs = ["USDJPY,Daily", "EURUSD,Daily", "GBPUSD,M15", "USDJPY,M5", "USDJPY,M30", "USDJPY,M30"];
    return html`
      <div class="canvas">
        <div class="panes">
          <div class="pane">
            <div class="plot"><svg>${this.price()}</svg></div>
            <div class="axis"><svg>
              ${prices.map((p, i) => svg`<path class="crisp tick" d="M0 ${31 + i * 33}.5h3"/><text x="5" y=${35 + i * 33}>${p}</text>`)}
              <rect class="paper" x="2" y="139" width="41" height="11"/>
              <text class="ink" x="5" y="148">108.771</text>
            </svg></div>
          </div>
          <div class="pane">
            <div class="plot"><svg>
              <path class="crisp grid" d="M0 46.500H3000M0 122.500H3000"/>
              <polyline class="crisp stoch" points=${perBar(stoch, 6)}/>
              <polyline class="crisp signal" points=${perBar(smooth(stoch), 6)}/>
              <text x="4" y="12">slow-stoch 0.6612 2.4942</text>
            </svg></div>
            <div class="axis"><svg>${this.ticks([[8, "104.9669"], [47, "75"], [123, "25"], [162, "0.00"], [162, "-4.3058"]], 167)}</svg></div>
          </div>
          <div class="pane">
            <div class="plot"><svg>
              <path class="crisp grid" d="M0 69.500H3000"/>
              <polyline class="crisp pdi" points=${perBar(plusDi, 176)}/>
              <polyline class="crisp mdi" points=${perBar(minusDi, 176)}/>
              <polyline class="crisp adx" points=${perBar(adx, 176)}/>
              <text x="5" y="12">ADX(9) 53.3003 +DI:8.3416 -DI:25.1338  ADX(14) 41.0524 +DI:8.9770 -DI:24.9197</text>
            </svg></div>
            <div class="axis"><svg>${this.ticks([[8, "65"], [71, "25"], [106, "1"]], 111)}</svg></div>
          </div>
          <div class="pane">
            <div class="plot"><svg>
              <g transform="translate(-362 -890)">
                <polyline class="crisp macd" points=${macd}/>
                <polyline class="crisp signal" points=${macdSignal}/>
              </g>
              <text x="4" y="12">MACD_Line -0.0829 -0.0526</text>
            </svg></div>
            <div class="axis"><svg>${this.ticks([[8, "0.1916"], [54, "0.00"], [74, "-0.096"]], 80)}</svg></div>
          </div>
        </div>
        <svg class="times">
          ${times.map((t, i) => svg`<path class="crisp tick" d="M${1 + i * 64}.5 0v3"/><text x=${i * 64} y="12">${t}</text>`)}
        </svg>
        <div class="edge"></div>
      </div>
      <div class="tabs">
        ${tabs.map((t, i) => html`<button class=${classMap({ tab: true, on: i === 4, plain: i === 3 })}>${t}</button>`)}
        <div class="arrows">
          <button aria-label="Previous tab"><svg width="5" height="8" viewBox="0 0 5 8"><path d="M4 0v8l-4-4z" fill="#999"/></svg></button>
          <button aria-label="Next tab"><svg width="5" height="8" viewBox="0 0 5 8"><path d="M1 0v8l4-4z" fill="#999"/></svg></button>
        </div>
      </div>
    `;
  }
}

/* ------------------------------------------------------------------ */
/* Application                                                         */
/* ------------------------------------------------------------------ */

@customElement("app-root")
class AppRoot extends LitElement {
  static styles = css`
    :host { position: relative; display: grid; grid-template-rows: auto 27px 26px minmax(0, 1fr) 19px; height: 100vh; min-height: 600px; overflow: hidden; background: #f0f0f0; font-family: ${uiFont}; }
    .tools { display: flex; align-items: stretch; gap: 4px; }
    .side { display: flex; align-items: center; gap: 11px; margin-left: auto; padding-right: 5px; }
    .side button { border: 0; padding: 0; background: none; }
    .icon { display: block; width: 20px; height: 20px; }
    .main { display: grid; grid-template-columns: 354px minmax(0, 1fr); column-gap: 3px; min-height: 0; border-top: 1px solid #888; }
    .status { display: grid; grid-template-columns: 1fr 116px 102px 71px 71px 68px 69px 66px 147px; border-top: 1px solid #fff; font-size: 11px; color: #222; font-feature-settings: "palt"; }
    .cell { border-left: 1px solid #a0a0a0; margin-top: 3px; padding: 2px 0 0 5px; line-height: 13px; white-space: nowrap; }
    .cell.first { border-left: 0; padding-left: 0; }
    .net { display: flex; align-items: flex-start; gap: 4px; }
    .net svg { flex: none; }
    .arrow { position: absolute; left: 188px; top: 195px; width: 260px; height: 64px; pointer-events: none; filter: drop-shadow(1px 2px 2px #0005); }
  `;

  render() {
    return html`
      <title-bar></title-bar>
      <div class="tools">
        <tool-group .tools=${standard}></tool-group>
        <tool-group .tools=${charting}></tool-group>
        <div class="side">
          <button aria-label="Search">${icon("search")}</button>
          <button aria-label="Chat">${icon("chat")}</button>
        </div>
      </div>
      <div class="tools">
        <tool-group .tools=${drawing}></tool-group>
        <tool-group periods .tools=${periods}></tool-group>
      </div>
      <main class="main">
        <navigator-panel></navigator-panel>
        <chart-window></chart-window>
      </main>
      <footer class="status">
        <span class="cell first">F1キーでヘルプが表示されます</span>
        <span class="cell">Euro</span>
        <span class="cell"></span><span class="cell"></span><span class="cell"></span><span class="cell"></span><span class="cell"></span><span class="cell"></span>
        <span class="cell net">
          <svg width="23" height="13" viewBox="0 0 23 13">
            ${Array.from({ length: 8 }, (_, i) => svg`
              <path d="M${i * 3} 0h2v${9 - i}h-2z" fill="#5c7a14"/>
              <path d="M${i * 3} ${10 - i}h2v${3 + i}h-2z" fill="#8c1c10"/>`)}
          </svg>9981/1 kb
        </span>
      </footer>
      <svg class="arrow" viewBox="0 0 260 64" aria-hidden="true">
        <defs><linearGradient id="fade"><stop offset="0" stop-color="#f00" stop-opacity=".25"/><stop offset=".25" stop-color="#e00" stop-opacity=".45"/><stop offset=".62" stop-color="#e60000" stop-opacity=".72"/><stop offset=".85" stop-color="#f00000"/></linearGradient></defs>
        <path d="M4 7L203 24L205 17L225 39L200 55L202 48Q100 30 4 8z" fill="url(#fade)"/>
        <path d="M237 27v12l3-3l3 6l2-1l-2-6h3z" fill="#fff"/>
        <rect x="239.500" y="41.500" width="11" height="8" rx="2" fill="none" stroke="#fff" stroke-dasharray="1 1" stroke-width="2"/>
      </svg>
    `;
  }
}
